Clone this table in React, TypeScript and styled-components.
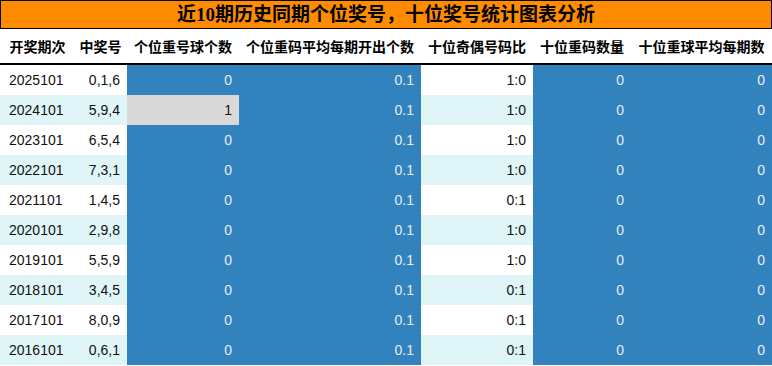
import React from "react";
import styled, { createGlobalStyle } from "styled-components";

const Global = createGlobalStyle`
  html, body { margin: 0; padding: 0; background: #fff; }
  body { font-family: "Liberation Sans", "Noto Sans CJK SC", sans-serif; }
`;

const COLS = "73px 53px 112px 182px 112px 98px 141px";

const Wrap = styled.div`
  width: 772px;
  box-sizing: border-box;
`;

const Title = styled.div`
  height: 29px;
  box-sizing: border-box;
  border: 1px solid #000;
  background: #ff8c00;
  display: flex;
  align-items: center;
  justify-content: center;
  font-family: "Liberation Serif", "Noto Sans CJK SC", serif;
  font-weight: bold;
  font-size: 19px;
  color: #000;
  line-height: 1;
`;

const HeaderRow = styled.div`
  display: grid;
  grid-template-columns: ${COLS};
  height: 36px;
  box-sizing: border-box;
  padding-left: 1px;
  border-bottom: 2px solid #000;
`;

const HeadCell = styled.div`
  display: flex;
  align-items: center;
  justify-content: center;
  font-family: "Noto Sans CJK SC", sans-serif;
  font-weight: bold;
  font-size: 14px;
  color: #000;
  white-space: nowrap;
`;

const Row = styled.div<{ $alt: boolean }>`
  display: grid;
  grid-template-columns: ${COLS};
  height: 30px;
  padding-left: 1px;
  background: ${(p) => (p.$alt ? "#dff5f7" : "#ffffff")};
`;

type Tone = "plain" | "blue" | "gray";

const Cell = styled.div<{ $tone: Tone; $align: "left" | "right" }>`
  display: flex;
  align-items: center;
  justify-content: ${(p) => (p.$align === "left" ? "flex-start" : "flex-end")};
  padding: ${(p) => (p.$align === "left" ? "0 0 0 8px" : "0 7px 0 0")};
  font-size: 14px;
  font-family: "Liberation Sans", sans-serif;
  background: ${(p) =>
    p.$tone === "blue" ? "#3182bd" : p.$tone === "gray" ? "#d9d9d9" : "transparent"};
  color: ${(p) => (p.$tone === "blue" ? "#e6eef5" : "#111")};
`;

const headers = [
  "开奖期次",
  "中奖号",
  "个位重号球个数",
  "个位重码平均每期开出个数",
  "十位奇偶号码比",
  "十位重码数量",
  "十位重球平均每期数",
];

const rows = [
  ["2025101", "0,1,6", "0", "0.1", "1:0", "0", "0"],
  ["2024101", "5,9,4", "1", "0.1", "1:0", "0", "0"],
  ["2023101", "6,5,4", "0", "0.1", "1:0", "0", "0"],
  ["2022101", "7,3,1", "0", "0.1", "1:0", "0", "0"],
  ["2021101", "1,4,5", "0", "0.1", "0:1", "0", "0"],
  ["2020101", "2,9,8", "0", "0.1", "1:0", "0", "0"],
  ["2019101", "5,5,9", "0", "0.1", "1:0", "0", "0"],
  ["2018101", "3,4,5", "0", "0.1", "0:1", "0", "0"],
  ["2017101", "8,0,9", "0", "0.1", "0:1", "0", "0"],
  ["2016101", "0,6,1", "0", "0.1", "0:1", "0", "0"],
];

const toneFor = (col: number, value: string): Tone => {
  if (col === 2) return value === "0" ? "blue" : "gray";
  if (col === 3 || col === 5 || col === 6) return "blue";
  return "plain";
};

export default function App() {
  return (
    <Wrap>
      <Global />
      <Title>近10期历史同期个位奖号，十位奖号统计图表分析</Title>
      <HeaderRow>
        {headers.map((h) => (
          <HeadCell key={h}>{h}</HeadCell>
        ))}
      </HeaderRow>
      {rows.map((r, i) => (
        <Row key={r[0]} $alt={i % 2 === 1}>
          {r.map((v, c) => (
            <Cell key={c} $tone={toneFor(c, v)} $align={c === 0 ? "left" : "right"}>
              {v}
            </Cell>
          ))}
        </Row>
      ))}
    </Wrap>
  );
}
